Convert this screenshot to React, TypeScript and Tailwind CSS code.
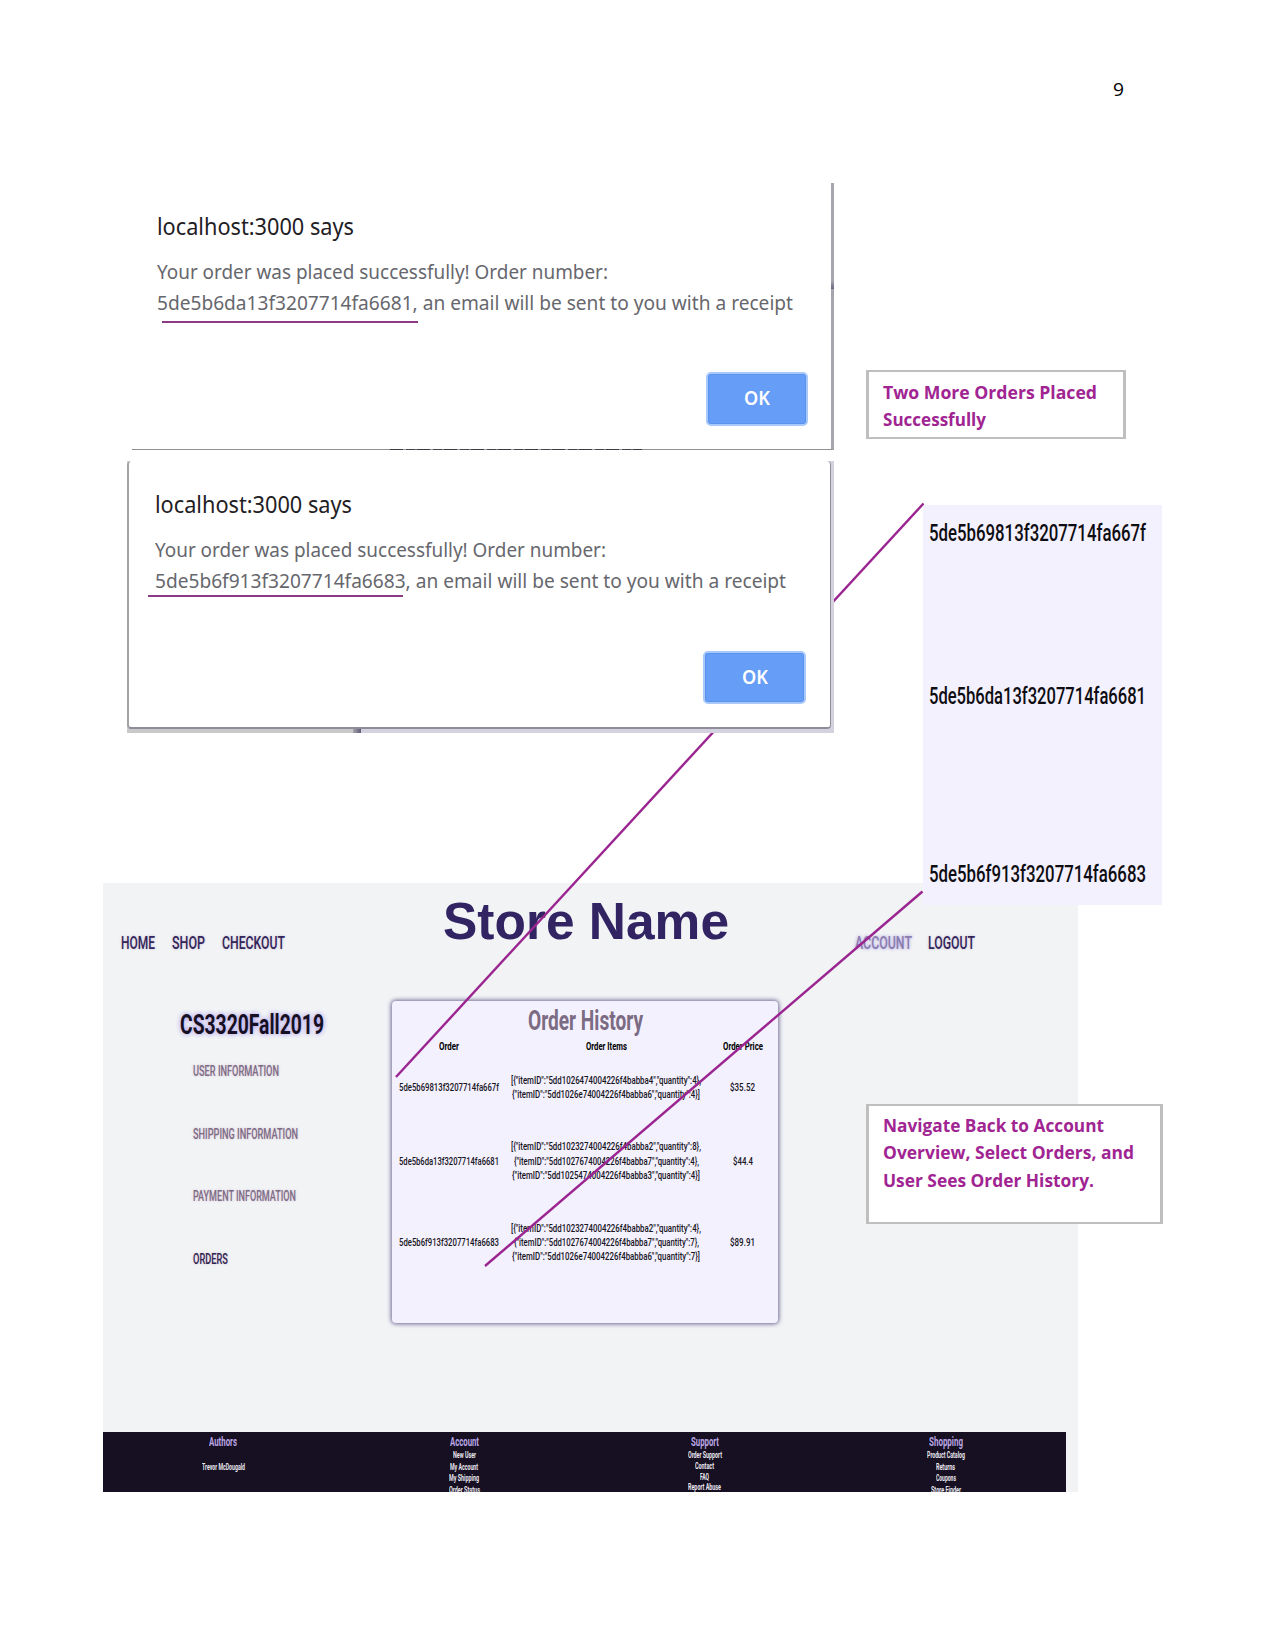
import { useLayoutEffect, useRef, useState } from "react";

/** Single line of text stretched or condensed to the width of its box. */
function Fit({ children, className = "" }: { children: string; className?: string }) {
  const outer = useRef<HTMLSpanElement>(null);
  const inner = useRef<HTMLSpanElement>(null);
  const [scale, setScale] = useState(1);
  useLayoutEffect(() => {
    if (!outer.current || !inner.current) return;
    inner.current.style.transform = "none";
    const natural = inner.current.getBoundingClientRect().width;
    const ratio = outer.current.getBoundingClientRect().width / natural;
    inner.current.style.transform = `scaleX(${ratio})`;
    setScale(ratio);
  }, [children]);
  return (
    <span ref={outer} className={`block shrink-0 ${className}`}>
      <span ref={inner} className="block w-max origin-left whitespace-nowrap" style={{ transform: `scaleX(${scale})` }}>
        {children}
      </span>
    </span>
  );
}

const condensed = "font-['Roboto',sans-serif]";
const humanist = "font-['Noto_Sans',sans-serif]";

function OkButton({ className }: { className: string }) {
  return (
    <button
      className={`flex items-center justify-center rounded-[5px] border-2 border-[#a9c9fa] bg-[#669df6] pb-[2px] font-semibold text-white shadow-[inset_0_0_0_1px_#5a92ee] ${className}`}
    >
      <Fit className="w-[26px] text-[19px] leading-6">OK</Fit>
    </button>
  );
}

function DialogOne() {
  return (
    <section className={`relative h-[267px] w-[702px] border-r-[3px] border-b border-[#a6a5ad] border-b-[#8f8f94] bg-white pt-[28px] pl-[25px] ${humanist}`}>
      <Fit className="w-[197px] text-[23px] leading-[30px] text-[#1f2024]">localhost:3000 says</Fit>
      <div className="mt-[15px] text-[20px] leading-[31px] text-[#66676d]">
        <Fit className="w-[451px]">Your order was placed successfully! Order number:</Fit>
        <Fit className="w-[636px]">5de5b6da13f3207714fa6681, an email will be sent to you with a receipt</Fit>
      </div>
      <div className="mt-[3px] ml-[5px] h-[2px] w-[256px] bg-[#8b3a84]" />
      <OkButton className="mt-[49px] ml-[549px] h-[54px] w-[102px]" />
      <div className="absolute -bottom-px left-[258px] h-px w-[252px] bg-[repeating-linear-gradient(90deg,#3b3940_0_13px,#9a999f_13px_16px,#46434b_16px_25px,#77757c_25px_27px)]" />
      <div className="absolute top-[98px] -right-[3px] h-[8px] w-[3px] bg-linear-to-b from-[#a6a5ad] to-[#6a6682]" />
    </section>
  );
}

function DialogTwo() {
  return (
    <section className="relative z-10 mt-[11px] ml-[127px] flex h-[272px] w-[707px] flex-col bg-[#d4d2df]">
      <div className={`h-[268px] w-[704px] rounded-[4px] border-r border-b-2 border-l-2 border-[#a3a3a6] border-r-[#8f8e9b] border-b-[#8e8c99] bg-white pt-[28px] pl-[26px] ${humanist}`}>
        <Fit className="w-[197px] text-[23px] leading-[30px] text-[#1f2024]">localhost:3000 says</Fit>
        <div className="mt-[15px] text-[20px] leading-[31px] text-[#66676d]">
          <Fit className="w-[451px]">Your order was placed successfully! Order number:</Fit>
          <Fit className="w-[631px]">5de5b6f913f3207714fa6683, an email will be sent to you with a receipt</Fit>
        </div>
        <div className="-mt-px -ml-[7px] h-[2px] w-[255px] bg-[#8b3a84]" />
        <OkButton className="mt-[54px] ml-[548px] h-[53px] w-[103px]" />
      </div>
      <div className="flex h-1">
        <div className="w-[226px] bg-[#c9c9cb]" />
        <div className="w-[8px] bg-linear-to-r from-[#a5a4ae] to-[#5f5b78]" />
      </div>
    </section>
  );
}

function Nav() {
  return (
    <header className={`flex h-[118px] items-start pl-[18px] text-[18px] leading-6 font-medium text-[#33265a] ${condensed}`}>
      <nav className="flex gap-[17px] pt-[48px] [text-shadow:0_0_3px_#c9b9cf]">
        <Fit className="w-[34px]">HOME</Fit>
        <Fit className="w-[33px]">SHOP</Fit>
        <Fit className="w-[63px]">CHECKOUT</Fit>
      </nav>
      <h1 className="mt-[8px] ml-[158px] font-['Liberation_Sans',sans-serif] text-[52px] leading-[60px] font-bold text-[#322463]">
        <Fit className="w-[286px]">Store Name</Fit>
      </h1>
      <nav className="ml-[126px] flex gap-[16px] pt-[48px]">
        <Fit className="w-[57px] text-[#8a7daf] [text-shadow:0_0_4px_#a795dd]">ACCOUNT</Fit>
        <Fit className="w-[47px] [text-shadow:0_0_3px_#c9b9cf]">LOGOUT</Fit>
      </nav>
    </header>
  );
}

function Sidebar() {
  return (
    <aside className={`w-[289px] pt-[9px] ${condensed}`}>
      <Fit className="ml-[77px] w-[144px] text-[27px] leading-[30px] font-bold text-[#161022] [text-shadow:0_0_6px_#9c86ea]">
        CS3320Fall2019
      </Fit>
      <div className="mt-[21px] ml-[90px] flex flex-col gap-[42.7px] text-[15px] leading-5 font-medium text-[#7d6c86] [text-shadow:0_0_3px_#d5bfce]">
        <Fit className="w-[86px]">USER INFORMATION</Fit>
        <Fit className="w-[105px]">SHIPPING INFORMATION</Fit>
        <Fit className="w-[103px]">PAYMENT INFORMATION</Fit>
        <Fit className="w-[35px] text-[#2f2350]">ORDERS</Fit>
      </div>
    </aside>
  );
}

const orders = [
  {
    id: "5de5b69813f3207714fa667f",
    price: "$35.52",
    priceWidth: "w-[25px]",
    gap: "mt-[20px]",
    items: [
      { text: '[{"itemID":"5dd1026474004226f4babba4","quantity":4},', width: "w-[190px]" },
      { text: '{"itemID":"5dd1026e74004226f4babba6","quantity":4}]', width: "w-[188px]" },
    ],
  },
  {
    id: "5de5b6da13f3207714fa6681",
    price: "$44.4",
    priceWidth: "w-[20px]",
    gap: "mt-[38px]",
    items: [
      { text: '[{"itemID":"5dd1023274004226f4babba2","quantity":8},', width: "w-[190px]" },
      { text: '{"itemID":"5dd1027674004226f4babba7","quantity":4},', width: "w-[185px]" },
      { text: '{"itemID":"5dd1025474004226f4babba3","quantity":4}]', width: "w-[188px]" },
    ],
  },
  {
    id: "5de5b6f913f3207714fa6683",
    price: "$89.91",
    priceWidth: "w-[25px]",
    gap: "mt-[39px]",
    items: [
      { text: '[{"itemID":"5dd1023274004226f4babba2","quantity":4},', width: "w-[190px]" },
      { text: '{"itemID":"5dd1027674004226f4babba7","quantity":7},', width: "w-[185px]" },
      { text: '{"itemID":"5dd1026e74004226f4babba6","quantity":7}]', width: "w-[188px]" },
    ],
  },
];

const columns = "grid grid-cols-[113px_202px_71px] items-center justify-items-center";

function OrderHistory() {
  return (
    <section className={`h-[322px] w-[386px] rounded-[4px] bg-[#f4f1ff] pt-[5px] text-[11.5px] text-[#17151d] shadow-[0_0_4px_1px_#6f6593] ${condensed}`}>
      <Fit className="ml-[136px] w-[115px] text-[27px] leading-[30px] font-bold text-[#7b6b83]">Order History</Fit>
      <div className={`mt-[3px] leading-[14px] font-bold text-black ${columns}`}>
        <Fit className="w-[20px]">Order</Fit>
        <Fit className="w-[41px]">Order Items</Fit>
        <Fit className="w-[40px]">Order Price</Fit>
      </div>
      {orders.map((order) => (
        <div key={order.id} className={`leading-[14.2px] font-medium ${columns} ${order.gap}`}>
          <Fit className="w-[100px]">{order.id}</Fit>
          <div className="flex flex-col items-center">
            {order.items.map((item) => (
              <Fit key={item.text} className={item.width}>
                {item.text}
              </Fit>
            ))}
          </div>
          <Fit className={order.priceWidth}>{order.price}</Fit>
        </div>
      ))}
    </section>
  );
}

const footer = [
  { title: "Authors", width: "w-[28px]", pitch: "pt-[11.5px] leading-[11.5px]", links: [["Trevor McDougald", "w-[43px]"]] },
  {
    title: "Account",
    width: "w-[29px]",
    pitch: "leading-[11.5px]",
    links: [["New User", "w-[23px]"], ["My Account", "w-[28px]"], ["My Shipping", "w-[30px]"], ["Order Status", "w-[31px]"]],
  },
  {
    title: "Support",
    width: "w-[28px]",
    pitch: "leading-[10.8px]",
    links: [["Order Support", "w-[34px]"], ["Contact", "w-[19px]"], ["FAQ", "w-[9px]"], ["Report Abuse", "w-[33px]"]],
  },
  {
    title: "Shopping",
    width: "w-[34px]",
    pitch: "leading-[11.5px]",
    links: [["Product Catalog", "w-[38px]"], ["Returns", "w-[19px]"], ["Coupons", "w-[20px]"], ["Store Finder", "w-[30px]"]],
  },
];

function Footer() {
  return (
    <footer className={`grid h-[60px] w-[963px] grid-cols-4 overflow-hidden bg-[#161022] pt-[3px] ${condensed}`}>
      {footer.map((col) => (
        <div key={col.title} className="flex flex-col items-center">
          <Fit className={`text-[12px] leading-[14px] font-bold text-[#bba5e4] ${col.width}`}>{col.title}</Fit>
          <div className={`mt-px flex flex-col items-center text-[8.5px] font-bold text-[#ebe8f0] ${col.pitch}`}>
            {col.links.map(([label, width]) => (
              <Fit key={label} className={width}>
                {label}
              </Fit>
            ))}
          </div>
        </div>
      ))}
    </footer>
  );
}

const callout = "border-x-3 border-y-2 border-[#bfbfbf] bg-white pl-[14px] text-[18px] leading-[27.3px] font-bold text-[#a02492] font-['Open_Sans',sans-serif]";

export default function App() {
  return (
    <main className="relative flex h-[1650px] w-[1275px] flex-col overflow-hidden bg-white">
      <div className="flex h-[183px] shrink-0 justify-end pt-[78px] pr-[151px] font-['Open_Sans',sans-serif] text-[18px] leading-[22px] text-black">
        <Fit className="h-[22px] w-[11px]">9</Fit>
      </div>
      <div className="flex shrink-0 items-start gap-[32px] pl-[132px]">
        <DialogOne />
        <aside className={`mt-[187px] h-[69px] w-[260px] pt-[7px] ${callout}`}>
          <Fit className="w-[214px]">Two More Orders Placed</Fit>
          <Fit className="w-[103px]">Successfully</Fit>
        </aside>
      </div>
      <DialogTwo />
      <section className="mt-[150px] ml-[103px] flex h-[609px] w-[975px] shrink-0 flex-col bg-[#f1f3f5]">
        <Nav />
        <div className="flex h-[431px] items-start">
          <Sidebar />
          <OrderHistory />
        </div>
        <Footer />
      </section>

      <div className={`absolute top-[505px] left-[923px] flex h-[400px] w-[239px] flex-col bg-[#f4f1ff] pt-[13px] pl-[6px] text-[24px] leading-[30px] font-medium text-[#0e0d12] ${condensed}`}>
        <Fit className="w-[217px]">5de5b69813f3207714fa667f</Fit>
        <Fit className="mt-[133px] w-[217px]">5de5b6da13f3207714fa6681</Fit>
        <Fit className="mt-[148px] w-[217px]">5de5b6f913f3207714fa6683</Fit>
      </div>
      <svg className="absolute inset-0" width="1275" height="1650" viewBox="0 0 1275 1650" stroke="#9b2590" strokeWidth="2.4">
        <path d="M923.5 503.5 L396 1077" />
        <path d="M922.5 891.5 L485 1266" />
      </svg>
      <aside className={`absolute top-[1104px] left-[866px] h-[120px] w-[297px] pt-[6px] ${callout}`}>
        <Fit className="w-[221px]">Navigate Back to Account</Fit>
        <Fit className="w-[251px]">Overview, Select Orders, and</Fit>
        <Fit className="w-[211px]">User Sees Order History.</Fit>
      </aside>
    </main>
  );
}
